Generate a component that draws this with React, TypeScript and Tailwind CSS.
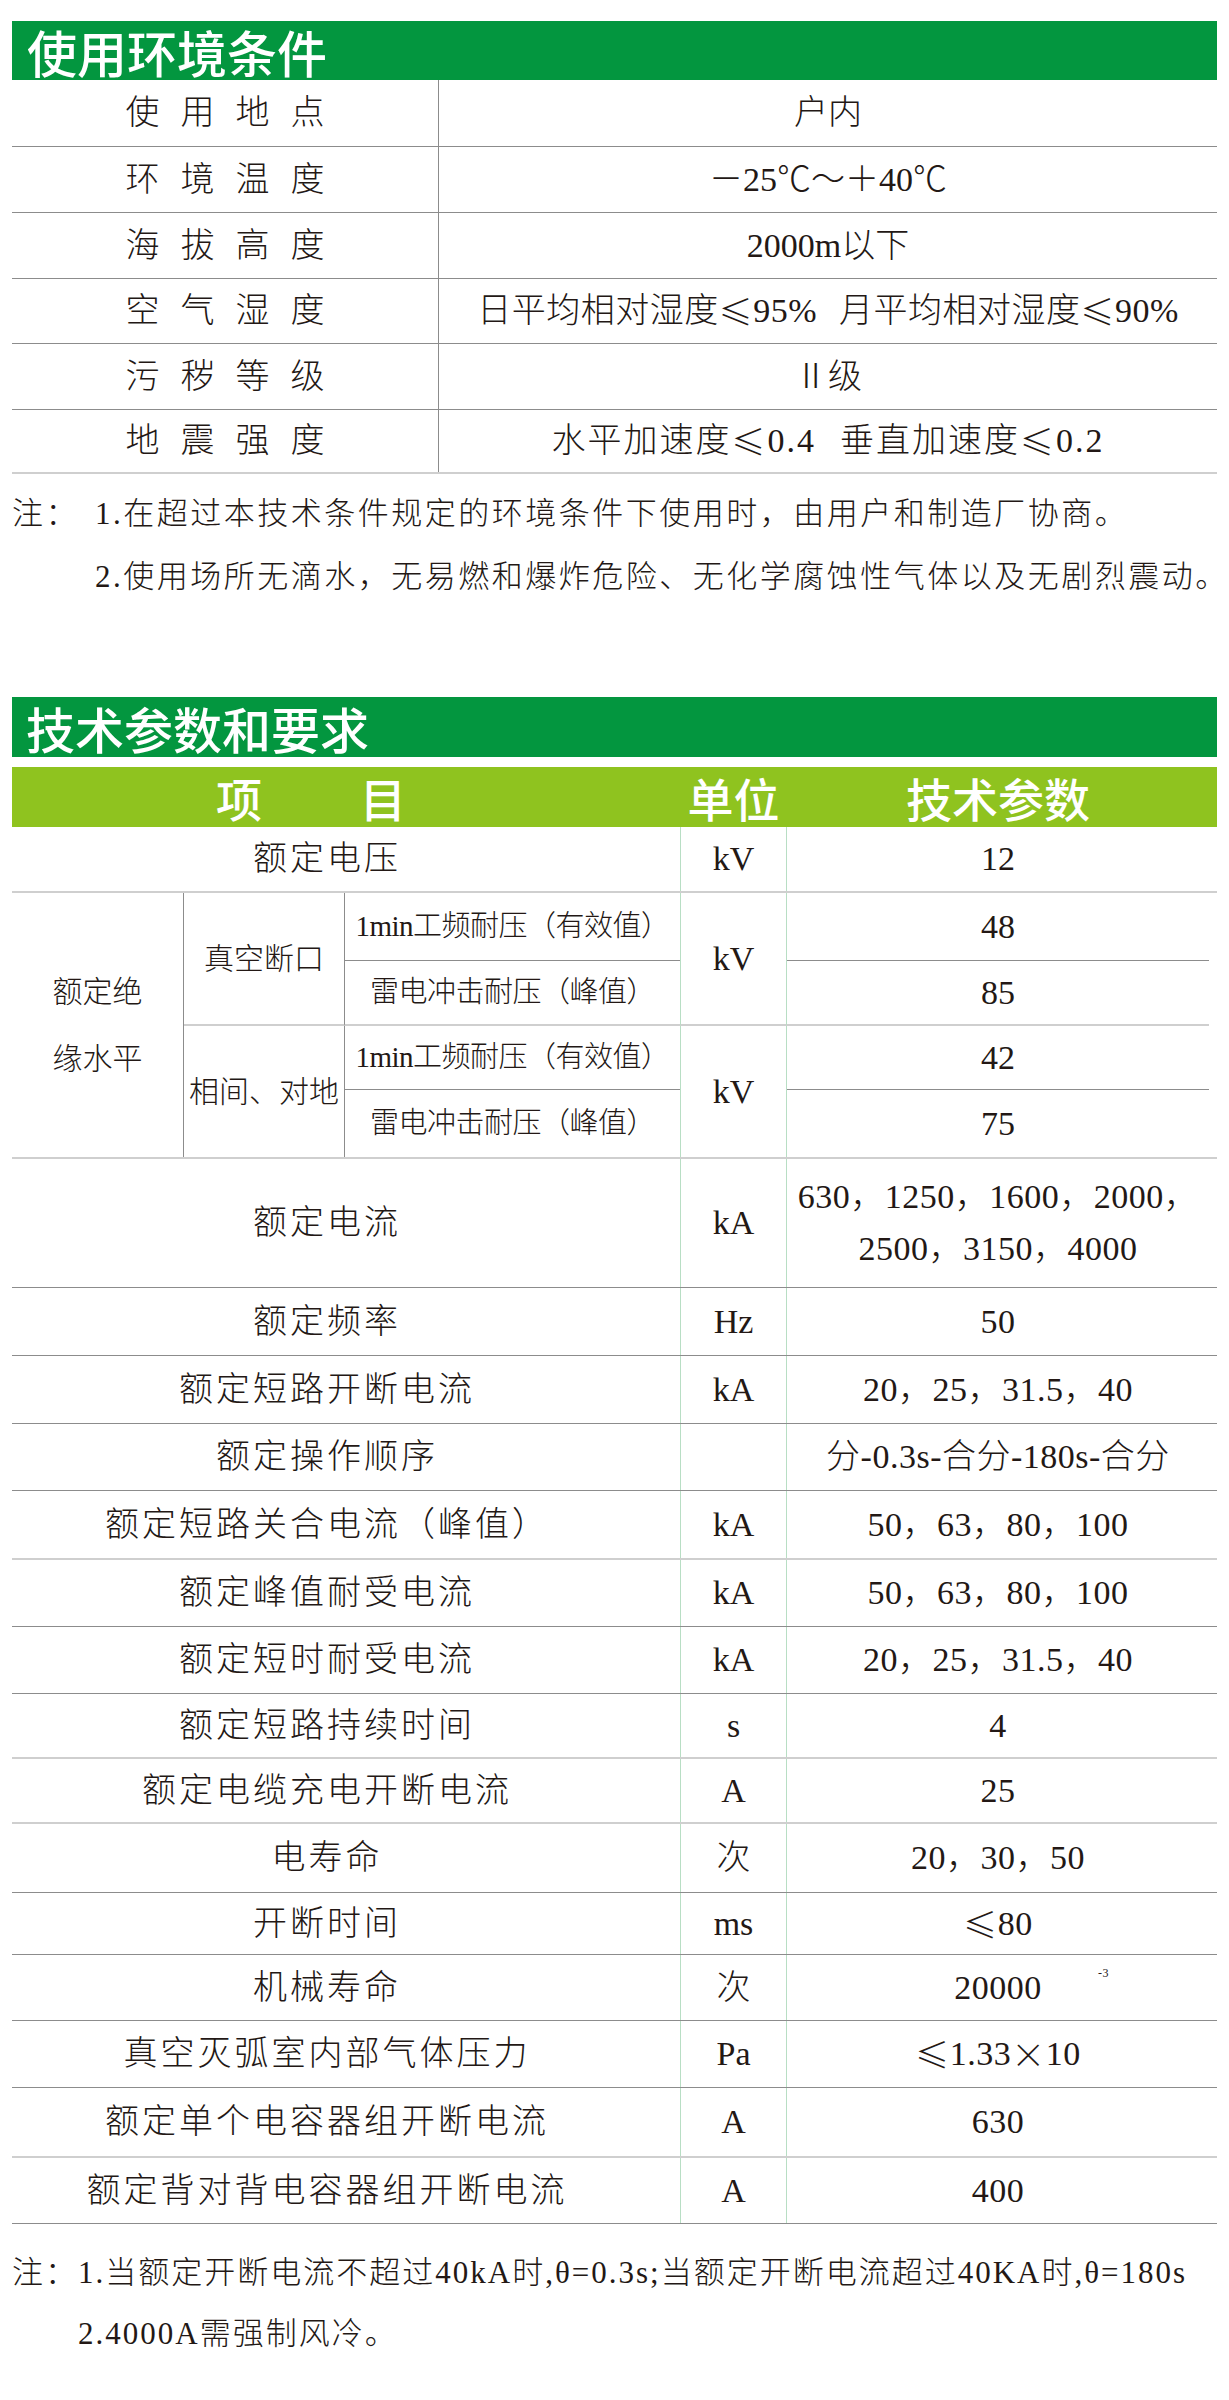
import React from "react";

const Le = () => <span className="font-['Noto_Sans_CJK_SC',sans-serif]">≤</span>;

const envRows: { label: string; value: React.ReactNode; h: string; vcls?: string }[] = [
  { label: "使用地点", value: "户内", h: "h-[67px]" },
  { label: "环境温度", value: "－25℃～＋40℃", h: "h-[66px]" },
  { label: "海拔高度", value: "2000m以下", h: "h-[66px]" },
  {
    label: "空气湿度",
    value: (
      <>
        日平均相对湿度<Le />95%<span className="w-[22px]" />月平均相对湿度<Le />90%
      </>
    ),
    h: "h-[65px]",
    vcls: "tracking-[0.5px]",
  },
  { label: "污秽等级", value: "Ⅱ级", h: "h-[66px]" },
  {
    label: "地震强度",
    value: (
      <>
        水平加速度<Le />0.4<span className="w-[24px]" />垂直加速度<Le />0.2
      </>
    ),
    h: "h-[64px]",
    vcls: "tracking-[2px]",
  },
];

type Row = {
  item: string;
  unit: string;
  value: React.ReactNode;
  h: string;
  light?: boolean;
  sup?: boolean;
};

const rows: Row[] = [
  {
    item: "额定电流",
    unit: "kA",
    value: (
      <span className="leading-[52px] text-center">
        630，1250，1600，2000，
        <br />
        2500，3150，4000
      </span>
    ),
    h: "h-[129px]",
  },
  { item: "额定频率", unit: "Hz", value: "50", h: "h-[68px]" },
  { item: "额定短路开断电流", unit: "kA", value: "20，25，31.5，40", h: "h-[68px]" },
  { item: "额定操作顺序", unit: "", value: "分-0.3s-合分-180s-合分", h: "h-[67px]" },
  { item: "额定短路关合电流（峰值）", unit: "kA", value: "50，63，80，100", h: "h-[69px]", light: true },
  { item: "额定峰值耐受电流", unit: "kA", value: "50，63，80，100", h: "h-[67px]" },
  { item: "额定短时耐受电流", unit: "kA", value: "20，25，31.5，40", h: "h-[67px]" },
  { item: "额定短路持续时间", unit: "s", value: "4", h: "h-[65px]", light: true },
  { item: "额定电缆充电开断电流", unit: "A", value: "25", h: "h-[65px]", light: true },
  { item: "电寿命", unit: "次", value: "20，30，50", h: "h-[69px]" },
  {
    item: "开断时间",
    unit: "ms",
    value: (
      <>
        <Le />80
      </>
    ),
    h: "h-[62px]",
  },
  { item: "机械寿命", unit: "次", value: "20000", h: "h-[66px]", sup: true },
  {
    item: "真空灭弧室内部气体压力",
    unit: "Pa",
    value: (
      <>
        <Le />1.33<span className="font-['Noto_Sans_CJK_SC',sans-serif]">×</span>10
      </>
    ),
    h: "h-[67px]",
  },
  { item: "额定单个电容器组开断电流", unit: "A", value: "630", h: "h-[70px]", light: true },
  { item: "额定背对背电容器组开断电流", unit: "A", value: "400", h: "h-[66px]" },
];

function DataRow({ r }: { r: Row }) {
  return (
    <div
      className={`grid grid-cols-[668px_107px_422px] ${r.h} ${
        r.light ? "border-b-2 border-[#cfcfcf]" : "border-b border-[#8c8c8c]"
      }`}
    >
      <div className="flex items-center justify-center pr-[38px] text-[34px] tracking-[3px] leading-none">
        {r.item}
      </div>
      <div className="flex items-center justify-center border-x border-[#b8dec4] text-[34px] leading-none">
        {r.unit}
      </div>
      <div className="relative flex items-center justify-center text-[34px] leading-none tracking-[0.5px]">
        {r.value}
        {r.sup && (
          <span className="absolute left-[311px] top-[12px] text-[12px] leading-none">-3</span>
        )}
      </div>
    </div>
  );
}

export default function App() {
  const dark = "border-[#8c8c8c]";
  return (
    <div className="w-[1229px] min-h-[2400px] bg-white text-[#231815] font-light font-['Liberation_Serif','Noto_Sans_CJK_SC',serif]">
      <div className="px-[12px] pt-[21px]">
        {/* Section 1 header */}
        <div className="h-[59px] bg-[#03963f] flex items-center pl-[15px] text-white text-[50px] leading-none font-['Noto_Sans_CJK_SC',sans-serif] font-medium">
          使用环境条件
        </div>

        {/* Section 1 table */}
        <div>
          {envRows.map((r, i) => (
            <div
              key={r.label}
              className={`grid grid-cols-[427px_1fr] ${r.h} ${
                i === envRows.length - 1 ? "border-b-2 border-[#cfcfcf]" : `border-b ${dark}`
              }`}
            >
              <div className={`flex items-center justify-center border-r ${dark} text-[34px] tracking-[21px] pl-[21px] leading-none`}>
                {r.label}
              </div>
              <div className={`flex items-center justify-center text-[34px] leading-none whitespace-nowrap ${r.vcls ?? ""}`}>
                {r.value}
              </div>
            </div>
          ))}
        </div>

        {/* Section 1 notes */}
        <div className="pt-[8px] text-[31px] tracking-[2.5px] leading-none whitespace-nowrap">
          <div className="h-[63px] flex items-center">
            <span className="w-[83px] shrink-0">注：</span>
            <span>1.在超过本技术条件规定的环境条件下使用时，由用户和制造厂协商。</span>
          </div>
          <div className="h-[63px] flex items-center pl-[83px]">
            2.使用场所无滴水，无易燃和爆炸危险、无化学腐蚀性气体以及无剧烈震动。
          </div>
        </div>

        {/* Section 2 header */}
        <div className="mt-[89px] h-[60px] bg-[#03963f] flex items-center pl-[14px] text-white text-[49px] leading-none font-['Noto_Sans_CJK_SC',sans-serif] font-medium">
          技术参数和要求
        </div>

        {/* Column header */}
        <div className="mt-[10px] h-[60px] bg-[#8fc31f] grid grid-cols-[668px_107px_422px] text-white text-[46px] leading-none font-['Noto_Sans_CJK_SC',sans-serif] font-medium">
          <div className="flex items-center justify-center gap-[98px] pr-[70px]">
            <span>项</span>
            <span>目</span>
          </div>
          <div className="flex items-center justify-center">单位</div>
          <div className="flex items-center justify-center">技术参数</div>
        </div>

        {/* 额定电压 */}
        <div className="grid grid-cols-[668px_107px_422px] h-[66px] border-b-2 border-[#cfcfcf]">
          <div className="flex items-center justify-center pr-[38px] text-[34px] tracking-[3px] leading-none">额定电压</div>
          <div className="flex items-center justify-center border-x border-[#b8dec4] text-[34px] leading-none">kV</div>
          <div className="flex items-center justify-center text-[34px] leading-none">12</div>
        </div>

        {/* Insulation block */}
        <div className="grid grid-cols-[172px_161px_335px_107px_422px] grid-rows-[68px_65px_64px_67px] border-b-2 border-[#cfcfcf] text-[29px] leading-none">
          <div className={`row-span-4 border-r ${dark} flex flex-col items-center justify-center gap-[37px] text-[30px]`}>
            <span>额定绝</span>
            <span>缘水平</span>
          </div>
          <div className={`row-span-2 border-r ${dark} border-b-2 border-b-[#cfcfcf] flex items-center justify-center text-[30px]`}>
            真空断口
          </div>
          <div className={`border-b ${dark} flex items-center justify-center tracking-[-0.5px]`}>1min工频耐压（有效值）</div>
          <div className="row-span-2 border-x border-[#b8dec4] border-b-2 border-b-[#cfcfcf] flex items-center justify-center text-[34px]">
            kV
          </div>
          <div className={`border-b ${dark} flex items-center justify-center text-[34px]`}>48</div>
          <div className="border-b-2 border-[#cfcfcf] flex items-center justify-center tracking-[-0.5px]">雷电冲击耐压（峰值）</div>
          <div className="border-b-2 border-[#cfcfcf] flex items-center justify-center text-[34px]">85</div>
          <div className={`row-span-2 border-r ${dark} flex items-center justify-center text-[30px]`}>相间、对地</div>
          <div className={`border-b ${dark} flex items-center justify-center tracking-[-0.5px]`}>1min工频耐压（有效值）</div>
          <div className="row-span-2 border-x border-[#b8dec4] flex items-center justify-center text-[34px]">kV</div>
          <div className={`border-b ${dark} flex items-center justify-center text-[34px]`}>42</div>
          <div className="flex items-center justify-center tracking-[-0.5px]">雷电冲击耐压（峰值）</div>
          <div className="flex items-center justify-center text-[34px]">75</div>
        </div>

        {rows.map((r) => (
          <DataRow key={r.item} r={r} />
        ))}

        {/* Section 2 notes */}
        <div className="pt-[18px] text-[31px] tracking-[2px] leading-none whitespace-nowrap">
          <div className="h-[61px] flex items-center">
            <span className="w-[66px] shrink-0">注：</span>
            <span>1.当额定开断电流不超过40kA时,θ=0.3s;当额定开断电流超过40KA时,θ=180s</span>
          </div>
          <div className="h-[61px] flex items-center pl-[66px]">2.4000A需强制风冷。</div>
        </div>
      </div>
    </div>
  );
}
